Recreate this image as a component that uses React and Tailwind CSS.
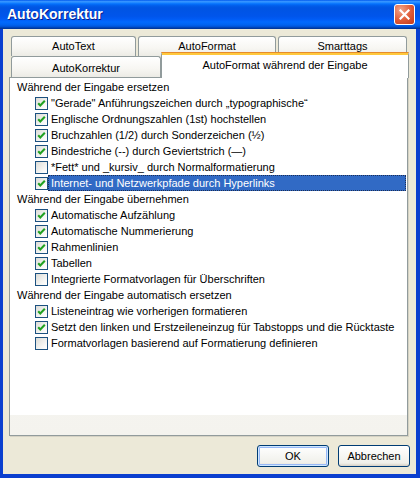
import React from "react";

const sections = [
  {
    title: "Während der Eingabe ersetzen",
    items: [
      { label: "\"Gerade\" Anführungszeichen durch „typographische“", checked: true },
      { label: "Englische Ordnungszahlen (1st) hochstellen", checked: true },
      { label: "Bruchzahlen (1/2) durch Sonderzeichen (½)", checked: true },
      { label: "Bindestriche (--) durch Geviertstrich (—)", checked: true },
      { label: "*Fett* und _kursiv_ durch Normalformatierung", checked: false },
      { label: "Internet- und Netzwerkpfade durch Hyperlinks", checked: true, selected: true },
    ],
  },
  {
    title: "Während der Eingabe übernehmen",
    items: [
      { label: "Automatische Aufzählung", checked: true },
      { label: "Automatische Nummerierung", checked: true },
      { label: "Rahmenlinien", checked: true },
      { label: "Tabellen", checked: true },
      { label: "Integrierte Formatvorlagen für Überschriften", checked: false },
    ],
  },
  {
    title: "Während der Eingabe automatisch ersetzen",
    items: [
      { label: "Listeneintrag wie vorherigen formatieren", checked: true },
      { label: "Setzt den linken und Erstzeileneinzug für Tabstopps und die Rücktaste", checked: true },
      { label: "Formatvorlagen basierend auf Formatierung definieren", checked: false },
    ],
  },
];

const tabBg = "bg-[linear-gradient(to_bottom,#ffffff,#f7f6f2_60%,#ecebe5)]";

function CheckBox({ checked }) {
  return (
    <span className="w-[13px] h-[13px] shrink-0 border border-[#1c5180] bg-[linear-gradient(135deg,#dcdcd7,#f7f7f5_70%,#ffffff)] flex items-center justify-center">
      {checked && (
        <svg width="11" height="11" viewBox="0 0 11 11">
          <path d="M2.2 5.2L4.3 7.4L8.8 2.8" stroke="#21a121" strokeWidth="2.1" fill="none" />
        </svg>
      )}
    </span>
  );
}

function Tab({ label, width, className = "" }) {
  return (
    <div
      className={`h-full ${width} shrink-0 rounded-t-[3px] border border-b-0 border-[#919b9c] ${tabBg} flex items-center justify-center ${className}`}
    >
      {label}
    </div>
  );
}

export default function App() {
  return (
    <div className="w-[420px] h-[478px] flex flex-col font-['Liberation_Sans',Arial,sans-serif] text-[11px] text-black select-none">
      {/* Title bar */}
      <div className="h-[29px] shrink-0 flex items-center justify-between pl-[7px] pr-[5px] bg-[linear-gradient(to_bottom,#0058ee_0%,#3593ff_5%,#288eff_8%,#127dff_11%,#036ffc_14%,#0262ee_18%,#0057e5_24%,#0054e3_30%,#0055eb_56%,#005bf5_66%,#026afe_76%,#0062ef_86%,#0052d6_92%,#0040ab_96%,#003092_100%)]">
        <span className="text-white font-bold text-[14px] [text-shadow:1px_1px_0_#0a1e8c]">AutoKorrektur</span>
        <div className="w-[21px] h-[21px] rounded-[3px] border border-white bg-[radial-gradient(circle_at_30%_25%,#f0a48a,#df5a36_55%,#c0391a)] flex items-center justify-center">
          <svg width="11" height="11" viewBox="0 0 11 11">
            <path d="M1.5 1.5L9.5 9.5M9.5 1.5L1.5 9.5" stroke="#ffffff" strokeWidth="2.2" strokeLinecap="square" />
          </svg>
        </div>
      </div>

      {/* Body */}
      <div className="flex-1 flex flex-col bg-[#ece9d8] border-l-[3px] border-r-[4px] border-b-[4px] border-[#0a3fcf]">
        <div className="pt-[7px] pl-[8px]">
          {/* back row */}
          <div className="flex gap-[2px] h-[20px]">
            <Tab label="AutoText" width="w-[125px]" />
            <Tab label="AutoFormat" width="w-[138px]" />
            <Tab label="Smarttags" width="w-[129px]" />
          </div>
          {/* front row */}
          <div className="flex items-end h-[21px]">
            <Tab label="AutoKorrektur" width="w-[150px]" className="pt-[2px]" />
            <div className="relative z-10 w-[248px] h-[26px] -mb-px shrink-0 rounded-t-[3px] border-x border-[#919b9c] bg-white flex flex-col">
              <div className="h-[1px] bg-[#e68b2c] rounded-t-[3px] -mx-px" />
              <div className="h-[2px] bg-[#ffc83c]" />
              <div className="flex-1 flex items-center justify-center pb-[3px]">AutoFormat während der Eingabe</div>
            </div>
          </div>
        </div>

        {/* Panel */}
        <div className="ml-[6px] w-[399px] h-[359px] border border-[#919b9c] shadow-[1px_1px_0_#d5d2c4] bg-[linear-gradient(to_bottom,#fbfbf9,#f4f3ee)] flex flex-col">
          <div className="h-[337px] bg-white pt-[1px] flex flex-col">
            {sections.map((section) => (
              <div key={section.title} className="flex flex-col">
                <div className="h-[16px] pl-[7px] flex items-center">{section.title}</div>
                {section.items.map((item) => (
                  <div key={item.label} className="h-[16px] pl-[25px] pr-[1px] flex items-center">
                    <CheckBox checked={item.checked} />
                    <span
                      className={`flex-1 h-[16px] pl-[2px] flex items-center whitespace-nowrap ${
                        item.selected ? "bg-[#316ac5] text-white border border-dotted border-[#1d2f55]" : "border border-transparent"
                      }`}
                    >
                      {item.label}
                    </span>
                  </div>
                ))}
              </div>
            ))}
          </div>
        </div>

        {/* Buttons */}
        <div className="flex justify-end gap-[9px] mt-[9px] pr-[6px]">
          <button className="w-[72px] h-[22px] rounded-[3px] border border-[#003c74] bg-[linear-gradient(to_bottom,#ffffff,#f0f0ea_85%,#d6d0c5)] shadow-[inset_0_0_0_1px_#cee7ff,inset_0_0_0_2px_#98b8f6] text-[11px]">
            OK
          </button>
          <button className="w-[72px] h-[22px] rounded-[3px] border border-[#003c74] bg-[linear-gradient(to_bottom,#ffffff,#f0f0ea_85%,#d6d0c5)] text-[11px]">
            Abbrechen
          </button>
        </div>
      </div>
    </div>
  );
}
